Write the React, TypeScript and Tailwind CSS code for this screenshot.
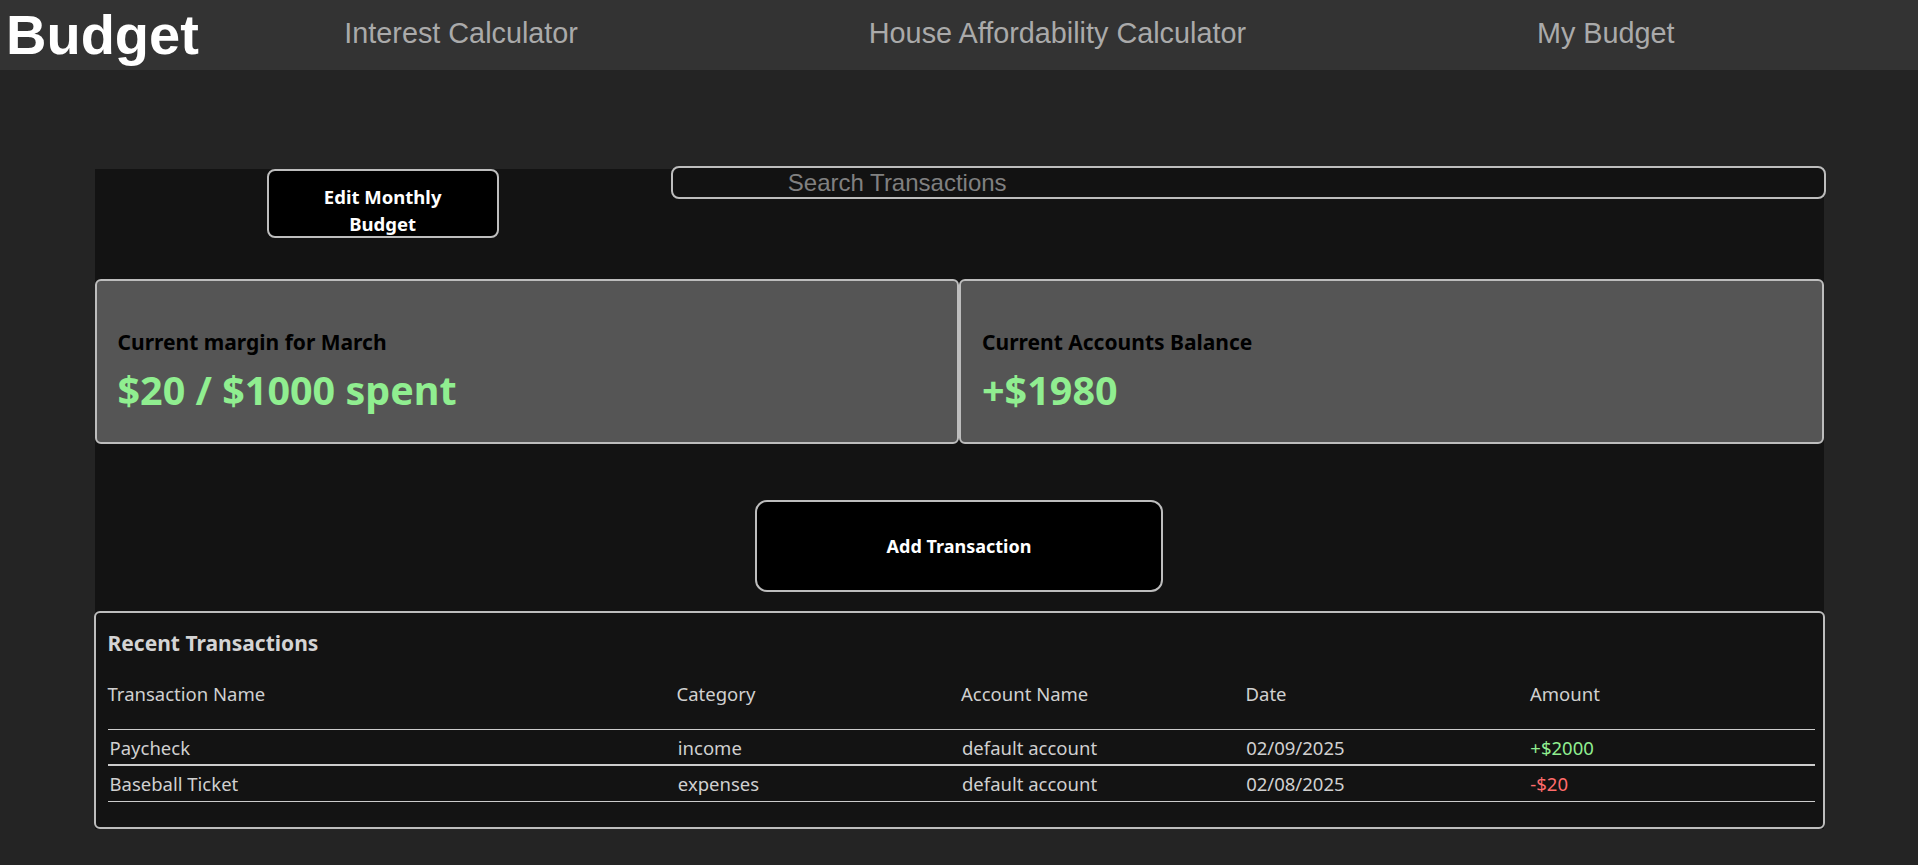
import { useState } from "react";

type Transaction = {
  name: string;
  category: string;
  account: string;
  date: string;
  amount: number;
};

const transactions: Transaction[] = [
  { name: "Paycheck", category: "income", account: "default account", date: "02/09/2025", amount: 2000 },
  { name: "Baseball Ticket", category: "expenses", account: "default account", date: "02/08/2025", amount: -20 },
];

const navLinks = ["Interest Calculator", "House Affordability Calculator", "My Budget"];

export default function App() {
  const [search, setSearch] = useState("");

  const filtered = transactions.filter((item) => item.name.toLowerCase().includes(search.toLowerCase().trim()));

  return (
    <div className="min-h-screen bg-[#242424] font-['Noto_Sans',sans-serif] text-[#d0d0d0]">
      <nav className="flex h-[70px] items-center bg-[#333333] font-['Liberation_Sans',Arial,sans-serif]">
        <h1 className="pl-[6px] text-[56px] font-bold leading-[56px] text-white">Budget</h1>
        <ul className="flex flex-1 justify-around pb-[2px] pr-[98px]">
          {navLinks.map((link) => (
            <li key={link}>
              <a href="#" className="text-[28.8px] leading-[28px] text-[#aaaaaa]">
                {link}
              </a>
            </li>
          ))}
        </ul>
      </nav>

      <main className="mx-auto mt-[99px] w-[1729px] bg-[#131313]">
        <div className="grid grid-cols-3">
          <div className="flex justify-center">
            <button
              type="button"
              className="flex h-[69px] w-[232px] flex-col items-center rounded-lg border-2 border-[#bdbdbd] bg-black px-9 pt-[12px] text-[18.5px] font-bold leading-[27px] text-white"
            >
              <span>Edit Monthly</span>
              <span>Budget</span>
            </button>
          </div>
          <div className="col-span-2">
            <input
              type="text"
              value={search}
              onChange={(e) => setSearch(e.target.value)}
              placeholder="Search Transactions"
              className="-mt-[3px] h-[33px] w-[calc(100%+2px)] rounded-lg border-2 border-[#bdbdbd] bg-[#121212] pl-[115px] font-['Liberation_Sans',Arial,sans-serif] text-[24px] text-white outline-none placeholder:text-[#808080]"
            />
          </div>
        </div>

        <div className="mt-[41px] flex">
          <div className="h-[165px] flex-1 rounded-md border-2 border-[#bdbdbd] bg-[#555555] pl-[21px] pt-[47px]">
            <h3 className="text-[21px] font-bold leading-[28px] text-black">Current margin for March</h3>
            <p className="mt-[7px] text-[39.5px] font-bold leading-[54px] text-[#90ee90]">$20 / $1000 spent</p>
          </div>
          <div className="h-[165px] flex-1 rounded-md border-2 border-[#bdbdbd] bg-[#555555] pl-[21px] pt-[47px]">
            <h3 className="text-[21px] font-bold leading-[28px] text-black">Current Accounts Balance</h3>
            <p className="mt-[7px] text-[39.5px] font-bold leading-[54px] text-[#90ee90]">+$1980</p>
          </div>
        </div>

        <div className="flex justify-center pt-[56px] pb-[19px]">
          <button
            type="button"
            className="h-[92px] w-[408px] rounded-xl border-2 border-[#bdbdbd] bg-black text-[18px] font-bold text-white"
          >
            Add Transaction
          </button>
        </div>

        <section className="-mx-px h-[218px] rounded-md border-2 border-[#bdbdbd] bg-[#131313] pl-[12px] pr-[8px] pt-[17px]">
          <h3 className="text-[21px] font-bold leading-[27px] text-[#d4d4d4]">Recent Transactions</h3>
          <div className="mt-[25px] grid grid-cols-6 border-b border-[#cccccc] pb-[23px] text-[18.5px] leading-[24px]">
            <span className="col-span-2">Transaction Name</span>
            <span>Category</span>
            <span>Account Name</span>
            <span>Date</span>
            <span>Amount</span>
          </div>
          {filtered.map((item, index) => (
            <div
              key={item.name}
              className={`grid h-[36px] grid-cols-6 pl-[2px] pt-[6px] text-[18.5px] leading-[24px] ${
                index === 0 ? "border-b-2 border-[#cccccc]" : "border-b border-[#cccccc]"
              }`}
            >
              <span className="col-span-2">{item.name}</span>
              <span>{item.category}</span>
              <span>{item.account}</span>
              <span>{item.date}</span>
              <span className={item.amount >= 0 ? "text-[#90ee90]" : "text-[#ff6b6b]"}>
                {item.amount >= 0 ? `+$${item.amount}` : `-$${Math.abs(item.amount)}`}
              </span>
            </div>
          ))}
        </section>
      </main>
    </div>
  );
}
